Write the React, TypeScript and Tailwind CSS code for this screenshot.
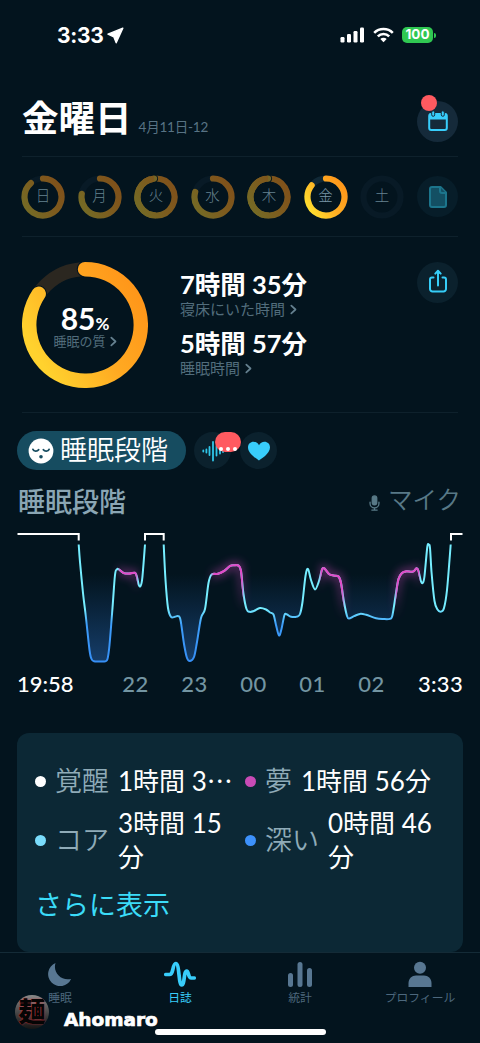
import type { ReactNode } from "react"

type Point = [number, number]

interface IDay {
    label: string
    angle: number
    active?: boolean
}

const DAYS: IDay[] = [
    { label: "日", angle: 319 },
    { label: "月", angle: 280 },
    { label: "火", angle: 354 },
    { label: "水", angle: 286 },
    { label: "木", angle: 357 },
    { label: "金", angle: 309, active: true },
    { label: "土", angle: 0 },
]

const FIRST_NIGHT: Point[] = [
    [78.7, 544.5], [80, 562], [83, 593], [86, 618], [89.5, 650], [91.5, 659], [94, 661.2], [100, 661.4],
    [105, 661.4], [107.5, 659], [109.5, 645], [112.5, 608], [115, 575], [117, 569.3], [119, 569.5],
    [123.5, 573], [129, 573.6], [135, 572.8], [137, 577], [138.8, 585], [140.5, 586], [142.3, 578], [145, 544.5],
]

const SECOND_NIGHT: Point[] = [
    [163.7, 544.5], [165.5, 580], [168, 608], [171, 616.8], [175, 616.8], [178, 616.2], [180.5, 620], [184, 644],
    [187, 658], [190, 661], [194, 657], [197, 642], [201, 618], [205, 609], [208.5, 583], [211.5, 574.6],
    [218, 573.8], [224, 571], [230, 566], [234, 565.3], [238.5, 565.6], [241, 571], [243.5, 594], [246.5, 609], [249.5, 611.8],
    [254, 611], [260, 608], [266, 609.5], [270, 612.5], [273.5, 614.5], [276, 625], [279, 635.5], [281.5, 629],
    [284.5, 615], [287, 614.5], [291, 616.8], [297, 616.6], [300, 614], [302.5, 602], [305.5, 576], [308, 569], [311, 580],
    [315, 589.4], [319, 581], [322, 569.5], [324.5, 568.5], [329, 574], [334, 575.6], [338.5, 576.5], [341, 583],
    [344, 602], [347, 616], [349, 618.6], [354, 616.2], [360, 613.9], [366, 614.8], [376, 618.2],
    [383, 619], [390, 618.8], [392.5, 615], [396, 593], [398.5, 579], [402, 573], [406, 571.4], [413, 571.6],
    [416.5, 568.3], [418.5, 571], [421.2, 582], [423, 582.5], [424.5, 576], [427.3, 547], [428.7, 544.8],
    [430, 548], [431.6, 573], [434.5, 601], [437.5, 609.5], [441, 611.6], [444, 608], [447, 590], [450.7, 544.5],
]

const HOURS = ["22", "23", "00", "01", "02"]

// catmull-rom through all the points
function toPath(points: Point[]) {
    let d = `M${points[0][0]} ${points[0][1]}`
    for (let i = 0; i < points.length - 1; i++) {
        const p0 = points[i - 1] ?? points[i]
        const p1 = points[i]
        const p2 = points[i + 1]
        const p3 = points[i + 2] ?? p2
        d += ` C${p1[0] + (p2[0] - p0[0]) / 6} ${p1[1] + (p2[1] - p0[1]) / 6} ${p2[0] - (p3[0] - p1[0]) / 6} ${p2[1] - (p3[1] - p1[1]) / 6} ${p2[0]} ${p2[1]}`
    }
    return d
}

function arc(c: number, r: number, angle: number) {
    const a = (angle * Math.PI) / 180
    return `M${c} ${c - r} A${r} ${r} 0 ${angle > 180 ? 1 : 0} 1 ${c + r * Math.sin(a)} ${c - r * Math.cos(a)}`
}

function capAt(c: number, r: number, angle: number) {
    const a = (angle * Math.PI) / 180
    return { cx: c + r * Math.sin(a), cy: c - r * Math.cos(a) }
}

function DayRing({ label, angle, active }: IDay) {
    return (
        <div className="relative flex h-11 w-11 items-center justify-center">
            <svg viewBox="0 0 44 44" className="absolute inset-0 h-11 w-11">
                <defs>
                    <linearGradient id={`day-${label}`} x1="1" y1="0.1" x2="0" y2="0.75">
                        <stop offset="0" stopColor={active ? "#ff9419" : "#80501a"} />
                        <stop offset="0.5" stopColor={active ? "#ffac22" : "#7d5b1e"} />
                        <stop offset="1" stopColor={active ? "#ffdc2e" : "#756a25"} />
                    </linearGradient>
                </defs>
                <circle cx="22" cy="22" r="18.5" fill="none" stroke={active ? "#102836" : "#081a26"} strokeWidth="6.2" />
                {angle > 0 && (
                    <path d={arc(22, 18.5, angle)} fill="none" stroke={`url(#day-${label})`} strokeWidth="6.2" strokeLinecap="round" />
                )}
                {/* almost full: the end cap lies over the start */}
                {angle > 340 && (
                    <>
                        <circle {...capAt(22, 18.5, angle)} r="4" fill="#03141e" />
                        <circle {...capAt(22, 18.5, angle)} r="3.1" fill="#756525" />
                        <path d={arc(22, 18.5, angle)} fill="none" stroke={`url(#day-${label})`} strokeWidth="6.2" strokeLinecap="butt" clipPath="inset(0 50% 0 0)" />
                    </>
                )}
            </svg>
            <span className={`relative text-[14.5px] font-light leading-none ${active ? "text-[#7b98a8]" : "text-[#66828f]"}`}>{label}</span>
        </div>
    )
}

function Chevron() {
    return (
        <svg viewBox="0 0 8 12" className="h-[11px] w-[7px]" fill="none" stroke="#65808f" strokeWidth="2" strokeLinecap="round" strokeLinejoin="round">
            <path d="M1.5 1.5 6.3 6 1.5 10.5" />
        </svg>
    )
}

function StatusBar() {
    return (
        <div className="flex h-[70px] items-center justify-between pr-[44px] pl-[57px]">
            <div className="flex items-center gap-[4px]">
                <span className="font-['Inter'] text-[21px] font-bold leading-none tracking-[-0.3px]">3:33</span>
                <svg viewBox="0 0 17 17" className="mt-px h-[17px] w-[17px]" fill="#fff" stroke="#fff" strokeWidth="1.4" strokeLinejoin="round">
                    <path d="M15.8 1.2 1 7.200 6.800 9.800 9.200 15.800Z" />
                </svg>
            </div>
            <div className="flex items-center">
                <svg viewBox="0 0 25 16" className="mr-[8px] h-4 w-[25px]" fill="#fff">
                    <rect x="0.5" y="10" width="4" height="5.5" rx="1.2" />
                    <rect x="7" y="7" width="4" height="8.5" rx="1.2" />
                    <rect x="13.5" y="4" width="4" height="11.5" rx="1.2" />
                    <rect x="20" y="0.5" width="4" height="15" rx="1.2" />
                </svg>
                <svg viewBox="0 0 21 16" className="mr-[8px] h-4 w-[21px]" fill="none" stroke="#fff" strokeWidth="2.6">
                    <path d="M1.2 5.800a13.200 13.200 0 0 1 18.600 0" />
                    <path d="M4.8 9.400a8.100 8.100 0 0 1 11.400 0" />
                    <path d="M10.5 15.200 7.300 12a4.500 4.500 0 0 1 6.400 0Z" fill="#fff" stroke="none" />
                </svg>
                <div className="flex h-4 w-[31px] items-center justify-center rounded-[5px] bg-[#30c852] font-['Inter'] text-[13.5px] font-bold leading-none">100</div>
                <div className="ml-px h-[5px] w-[2px] rounded-r bg-[#30c852]" />
            </div>
        </div>
    )
}

function Header() {
    return (
        <div className="mx-[22px] flex h-[87px] items-center justify-between border-b border-[#0e212c] pt-4">
            <div className="flex items-baseline pb-[4px]">
                <h1 className="text-[36.5px] font-bold leading-none">金曜日</h1>
                <span className="ml-[7px] text-[13.5px] tracking-[-0.2px] text-[#587384]">4月11日-12</span>
            </div>
            <button className="relative flex h-[41px] w-[41px] items-center justify-center rounded-full bg-[#152a3a]">
                <svg viewBox="0 0 22 22" className="h-[22px] w-[22px]">
                    <rect x="2.2" y="4" width="17.6" height="16" rx="2" fill="none" stroke="#38cdfb" strokeWidth="2" />
                    <path d="M2.5 3.500h17V9.500h-17Z" fill="#38cdfb" />
                    <g fill="#38cdfb" stroke="#152a3a" strokeWidth="1">
                        <rect x="4.7" y="0.8" width="3" height="5.5" rx="1.5" />
                        <rect x="14.3" y="0.8" width="3" height="5.5" rx="1.5" />
                    </g>
                </svg>
                <span className="absolute -top-[6px] left-[4px] h-4 w-4 rounded-full bg-[#ff5a60]" />
            </button>
        </div>
    )
}

function Stat({ value, label }: { value: string; label: string }) {
    return (
        <div className="h-[59px]">
            <p className="h-[29px] text-[25.5px] font-bold leading-[29px] whitespace-nowrap">{value}</p>
            <p className="flex h-[20px] items-center gap-[5px] text-[15px] leading-[20px] text-[#526d7c]">
                {label}
                <Chevron />
            </p>
        </div>
    )
}

function Summary() {
    return (
        <div className="mx-[22px] flex h-[176px] border-b border-[#0e212c] pt-[25px]">
            <div className="relative flex h-[126px] w-[126px] flex-col items-center">
                <svg viewBox="0 0 126 126" className="absolute inset-0 h-[126px] w-[126px]" fill="none">
                    <defs>
                        <linearGradient id="quality" x1="0.95" y1="0.1" x2="0" y2="0.65">
                            <stop offset="0" stopColor="#ff9519" />
                            <stop offset="0.5" stopColor="#ffaa22" />
                            <stop offset="1" stopColor="#ffd22e" />
                        </linearGradient>
                    </defs>
                    <circle cx="63" cy="63" r="55.8" stroke="#2b2720" strokeWidth="14" />
                    <path d={arc(63, 55.8, 304)} stroke="#03141e" strokeWidth="16.5" strokeLinecap="round" />
                    <path d={arc(63, 55.8, 304)} stroke="url(#quality)" strokeWidth="14.4" strokeLinecap="round" />
                </svg>
                <p className="relative mt-[40px] h-[32px] text-[30px] font-bold leading-[32px]">
                    85<span className="text-[17px]">%</span>
                </p>
                <p className="relative flex items-center gap-[4px] text-[13px] leading-[14px] text-[#526d7c]">
                    睡眠の質
                    <Chevron />
                </p>
            </div>
            <div className="ml-8 pt-[8px]">
                <Stat value="7時間 35分" label="寝床にいた時間" />
                <Stat value="5時間 57分" label="睡眠時間" />
            </div>
            <button className="ml-auto flex h-[41px] w-[41px] items-center justify-center rounded-full bg-[#0b212d]">
                <svg viewBox="0 0 24 26" className="mb-[3px] h-[26px] w-6" fill="none" stroke="#36cdf8" strokeWidth="2" strokeLinecap="round" strokeLinejoin="round">
                    <path d="M7.500 9.500H6A2 2 0 0 0 4 11.500V21a2.500 2.500 0 0 0 2.500 2.500h11A2.500 2.500 0 0 0 20 21v-9.500a2 2 0 0 0-2-2h-1.500M12 17.500V3.500M9.300 5.600 12 2.800l2.700 2.800" />
                </svg>
            </button>
        </div>
    )
}

function StageTabs() {
    return (
        <div className="mt-[18px] flex h-[39px] items-center pl-[17px]">
            <button className="flex h-[39px] w-[169px] items-center gap-[6px] rounded-full bg-[#164c60] pl-[11px]">
                <svg viewBox="0 0 26 26" className="h-[26px] w-[26px] shrink-0">
                    <circle cx="13" cy="13" r="12.4" fill="#fff" />
                    <g fill="none" stroke="#164c60" strokeWidth="1.9" strokeLinecap="round">
                        <path d="M5 11.500c.8 1.900 4.200 2.200 5.600.3M15.400 11.800c1.400 1.900 4.800 1.600 5.600-.3" />
                    </g>
                    <circle cx="13" cy="18.800" r="1.8" fill="#164c60" />
                </svg>
                <span className="pb-[3px] text-[27px] font-[350] leading-none whitespace-nowrap">睡眠段階</span>
            </button>
            <button className="relative ml-2 flex h-[37px] w-[37px] items-center justify-center rounded-full bg-[#0b212d]">
                <svg viewBox="0 0 24 24" className="h-6 w-6" fill="none" stroke="#2fc6e8" strokeWidth="1.8" strokeLinecap="round">
                    <path d="M2.300 11.500v1M5.400 10.500v3M8.500 8v8M12 3v18.500M15.500 7.500v9M19 9v5.500M22 11v2" />
                </svg>
                <span className="absolute top-0 left-[21px] flex h-5 w-[26px] items-end justify-center gap-[3px] rounded-full bg-[#ff5a60] pb-px">
                    <i className="h-1 w-1 rounded-full bg-white" />
                    <i className="h-1 w-1 rounded-full bg-white" />
                    <i className="h-1 w-1 rounded-full bg-white" />
                </span>
            </button>
            <button className="ml-[9px] flex h-[37px] w-[37px] items-center justify-center rounded-full bg-[#0b212d]">
                <svg viewBox="0 0 24 24" className="mt-px h-6 w-6" fill="#38cdfb">
                    <path d="M12 21.500C10.500 20.300 1 14.800 1 8.500 1 5 3.500 2.800 6.500 2.800c2.400 0 4.500 1.400 5.500 3.400 1-2 3.100-3.400 5.500-3.400C20.500 2.800 23 5 23 8.500c0 6.300-9.500 11.800-11 13Z" />
                </svg>
            </button>
        </div>
    )
}

// opacity of the REM colour along the x axis
const REM_STOPS = [
    [0, 0], [117.5, 0], [120.5, 1], [136, 1], [138.5, 0], [210.5, 0], [214, 1], [242, 1], [244, 0],
    [319, 0], [321.5, 1], [342, 1], [345, 0], [394.5, 0], [397, 1], [418.5, 1], [420.5, 0], [480, 0],
]

function SleepChart() {
    const first = toPath(FIRST_NIGHT)
    const second = toPath(SECOND_NIGHT)

    return (
        <svg viewBox="0 524 480 144" className="block h-[144px] w-[480px]" fill="none">
            <defs>
                <linearGradient id="depth" gradientUnits="userSpaceOnUse" x1="0" y1="544" x2="0" y2="664">
                    <stop offset="0.54" stopColor="#75edff" />
                    <stop offset="0.67" stopColor="#3d9dfa" />
                    <stop offset="1" stopColor="#368ef5" />
                </linearGradient>
                <linearGradient id="rem" gradientUnits="userSpaceOnUse" x1="0" y1="0" x2="480" y2="0">
                    {REM_STOPS.map(([x, opacity]) => (
                        <stop key={x} offset={x / 480} stopColor="#e24bc8" stopOpacity={opacity} />
                    ))}
                </linearGradient>
                <linearGradient id="area" gradientUnits="userSpaceOnUse" x1="0" y1="574" x2="0" y2="662">
                    <stop offset="0" stopColor="#154275" stopOpacity="0" />
                    <stop offset="1" stopColor="#1a4577" stopOpacity="0.85" />
                </linearGradient>
                <filter id="glow" filterUnits="userSpaceOnUse" x="0" y="524" width="480" height="144">
                    <feGaussianBlur stdDeviation="4" />
                </filter>
                <clipPath id="asleep">
                    <rect x="0" y="524" width="420" height="144" />
                </clipPath>
            </defs>
            <path d={`${first}Z ${second}Z`} fill="url(#area)" clipPath="url(#asleep)" />
            <path d={`${first} ${second}`} stroke="url(#rem)" strokeWidth="7" opacity="0.4" filter="url(#glow)" />
            <path d={`${first} ${second}`} stroke="url(#depth)" strokeWidth="2" />
            <path d={`${first} ${second}`} stroke="url(#rem)" strokeWidth="2.1" />
            <path d="M17.500 534H78.700V540.500M145 540.500V534H163.700V540.500M451 540.500V534H462.500" stroke="#fff" strokeWidth="2" />
        </svg>
    )
}

function StageItem({ color, label, children }: { color: string; label: string; children: ReactNode }) {
    return (
        <div className="flex items-center">
            <span className={`h-[11px] w-[11px] shrink-0 rounded-full ${color}`} />
            <span className="mr-[9px] ml-[9px] shrink-0 text-[27px] font-[350] text-[#8fabb8]">{label}</span>
            <span className="whitespace-nowrap">{children}</span>
        </div>
    )
}

function StageCard() {
    return (
        <div className="mx-[17px] mt-[33px] h-[219px] rounded-[12px] bg-[#0c2835] pt-[31px] pl-[18px] text-[26px] leading-[34px]">
            <div className="grid h-[110px] grid-cols-[210px_1fr] grid-rows-[34px_68px] gap-y-[8px]">
                <StageItem color="bg-white" label="覚醒">1時間 3⋯</StageItem>
                <StageItem color="bg-[#c94bb6]" label="夢">1時間 56分</StageItem>
                <StageItem color="bg-[#7adcfb]" label="コア">3時間 15<br />分</StageItem>
                <StageItem color="bg-[#3d91fb]" label="深い">0時間 46<br />分</StageItem>
            </div>
            <button className="mt-[14px] block text-[27px] leading-[34px] text-[#3bdcf8]">さらに表示</button>
        </div>
    )
}

function Tab({ label, active, children }: { label: string; active?: boolean; children: ReactNode }) {
    return (
        <div className={`flex w-[120px] flex-col items-center ${active ? "text-[#38cdfb]" : "text-[#587792]"}`}>
            <svg viewBox="0 0 32 28" className="mt-[7px] h-7 w-8" fill="currentColor">
                {children}
            </svg>
            <span className={`mt-[2px] text-[11.8px] leading-[16px] ${active ? "" : "text-[#4d687d]"}`}>{label}</span>
        </div>
    )
}

function TabBar() {
    return (
        <nav className="flex border-t border-[#142b37]">
            <Tab label="睡眠">
                <path d="M11.500 3a12 12 0 1 0 15.600 15.900C17.500 21.500 8.500 12.500 11.500 3Z" />
            </Tab>
            <Tab label="日誌" active>
                <path d="M1.800 14.500h3.700c1.800 0 2.500-1.300 3.200-4.500.8-3.500 1.300-6.500 3-6.500 4 0 2.700 21.500 6 21.500 3.200 0 1.800-14 5-14 2.200 0 1.300 7 4.500 7h3" fill="none" stroke="currentColor" strokeWidth="3.7" strokeLinecap="round" strokeLinejoin="round" />
            </Tab>
            <Tab label="統計">
                <rect x="4" y="13" width="5" height="14" rx="2.5" />
                <rect x="13.5" y="2" width="5" height="25" rx="2.5" />
                <rect x="23" y="8" width="5" height="19" rx="2.5" />
            </Tab>
            <Tab label="プロフィール">
                <circle cx="16" cy="7.800" r="6" />
                <path d="M4.500 27v-4c0-4.500 3.500-7.500 7.500-7.500h8c4 0 7.500 3 7.500 7.500v4Z" />
            </Tab>
        </nav>
    )
}

function Watermark() {
    return (
        <div className="absolute top-[994px] left-[15px] flex items-center">
            <div className="flex h-[34px] w-[34px] items-center justify-center overflow-hidden rounded-full bg-linear-to-b from-[#8a8a8a] via-[#4a4a4a] to-[#151515]">
                <span className="text-[27px] font-black leading-none text-[#050505] [text-shadow:0_0_1.5px_#e0303c]">麺</span>
            </div>
            <span className="mt-[17px] ml-[15px] font-['DejaVu_Sans'] text-[18.5px] font-bold leading-none [-webkit-text-stroke:0.7px_#fff]">Ahomaro</span>
        </div>
    )
}

export default function App() {
    return (
        <div className="relative flex h-[1043px] w-[480px] flex-col overflow-hidden bg-[#03141e] font-['Lato','Noto_Sans_CJK_JP',sans-serif] text-white">
            <StatusBar />
            <Header />

            {/* WEEK */}
            <div className="mx-[22px] flex h-20 items-center justify-between border-b border-[#0e212c]">
                <div className="-ml-[1px] flex gap-[12.5px]">
                    {DAYS.map((day) => (
                        <DayRing key={day.label} {...day} />
                    ))}
                </div>
                <div className="flex h-[41px] w-[41px] items-center justify-center rounded-full bg-[#071d29]">
                    <svg viewBox="0 0 20 24" className="h-6 w-5" fill="#134f63" stroke="#1c758c" strokeWidth="2" strokeLinejoin="round">
                        <path d="M4 2h8.500L18 7.500V20a2 2 0 0 1-2 2H4a2 2 0 0 1-2-2V4a2 2 0 0 1 2-2Z" />
                        <path d="M12 2v4a2 2 0 0 0 2 2h4" />
                    </svg>
                </div>
            </div>

            <Summary />
            <StageTabs />

            {/* CHART */}
            <div className="flex h-[54px] items-center justify-between pt-[9px] pr-[19px] pl-[18px]">
                <h2 className="text-[27px] font-medium leading-none text-[#8aa6b4]">睡眠段階</h2>
                <div className="flex items-center gap-[8px]">
                    <svg viewBox="0 0 12 18" className="mt-[3px] h-[16px] w-[11px]" fill="none" stroke="#587987" strokeWidth="1.5" strokeLinecap="round">
                        <rect x="3.5" y="1" width="5" height="10" rx="2.5" fill="#587987" />
                        <path d="M1 8v1.500a5 5 0 0 0 10 0V8M6 14.500V17M3 17h6" />
                    </svg>
                    <span className="pb-[2px] text-[24.5px] font-[350] leading-none text-[#587987]">マイク</span>
                </div>
            </div>
            <SleepChart />
            <div className="flex h-[32px] items-center pr-[17px] pl-[17px] text-[22px] font-medium leading-none text-[#7395a2]">
                <span className="w-[89px] text-white">19:58</span>
                {HOURS.map((hour) => (
                    <span key={hour} className="w-[59px] text-center tracking-[0.5px]">{hour}</span>
                ))}
                <span className="ml-auto tracking-[0.3px] text-white">3:33</span>
            </div>

            <StageCard />
            <TabBar />
            <Watermark />
            <div className="absolute top-[1029px] left-[155px] h-[6px] w-[171px] rounded-full bg-white" />
        </div>
    )
}
